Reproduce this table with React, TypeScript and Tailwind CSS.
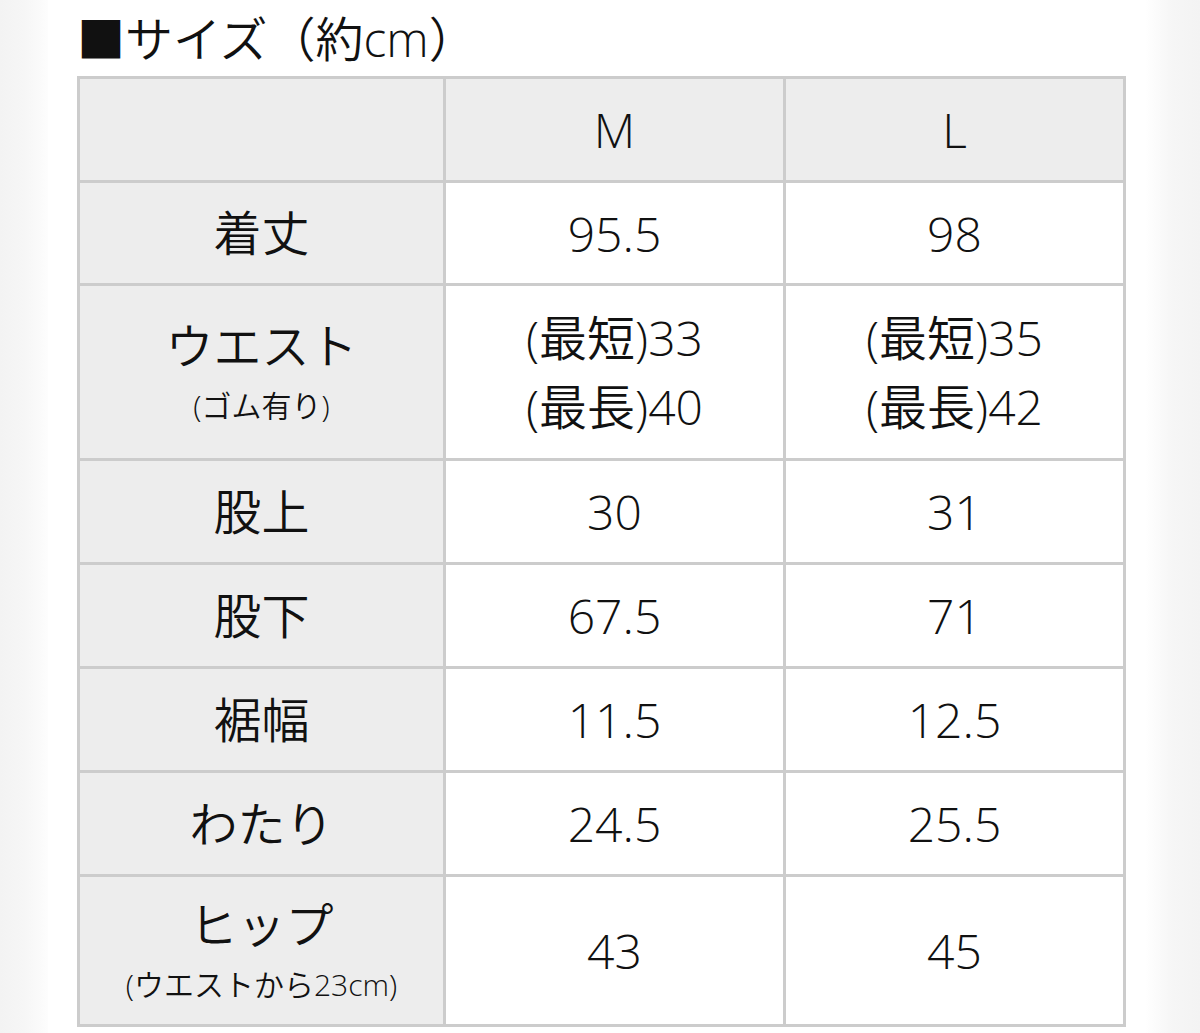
import React from "react";

type Row = {
  label: string;
  note?: string;
  m: string[];
  l: string[];
  h: string;
};

const rows: Row[] = [
  { label: "着丈", m: ["95.5"], l: ["98"], h: "h-[103px]" },
  {
    label: "ウエスト",
    note: "(ゴム有り)",
    m: ["(最短)33", "(最長)40"],
    l: ["(最短)35", "(最長)42"],
    h: "h-[175px]",
  },
  { label: "股上", m: ["30"], l: ["31"], h: "h-[104px]" },
  { label: "股下", m: ["67.5"], l: ["71"], h: "h-[104px]" },
  { label: "裾幅", m: ["11.5"], l: ["12.5"], h: "h-[104px]" },
  { label: "わたり", m: ["24.5"], l: ["25.5"], h: "h-[104px]" },
  {
    label: "ヒップ",
    note: "(ウエストから23cm)",
    m: ["43"],
    l: ["45"],
    h: "h-[150px]",
  },
];

const cell = "border-[3px] border-[#cccccc] text-center align-middle";

const Values = ({ lines }: { lines: string[] }) => (
  <div className="leading-[69px]">
    {lines.map((t) => (
      <div key={t}>{t}</div>
    ))}
  </div>
);

export default function App() {
  return (
    <div
      className="flex min-h-[1033px] w-[1200px] bg-white text-[#111] font-[350]"
      style={{ fontFamily: '"Open Sans", "Noto Sans CJK JP", sans-serif' }}
    >
      <div className="w-[48px] shrink-0 bg-gradient-to-r from-[#f3f3f3] via-[#f6f6f6] to-[#fdfdfd]" />
      <div className="w-[1097px] shrink-0 bg-white pl-[29px]">
        <h2 className="pt-[16px] pb-[14px] text-[48px] leading-[46px] font-[350]">
          ■サイズ（約cm）
        </h2>
        <table className="table-fixed border-collapse w-[1046px]">
          <colgroup>
            <col className="w-[366px]" />
            <col className="w-[340px]" />
            <col className="w-[340px]" />
          </colgroup>
          <thead>
            <tr className="h-[104px] bg-[#ededed] text-[48px]">
              <th className={cell + " font-[350]"}></th>
              <th className={cell + " font-[350]"}>M</th>
              <th className={cell + " font-[350]"}>L</th>
            </tr>
          </thead>
          <tbody>
            {rows.map((r) => (
              <tr key={r.label} className={r.h + " text-[48px]"}>
                <td className={cell + " bg-[#ededed]"}>
                  <div className="leading-[56px]">{r.label}</div>
                  {r.note && (
                    <div className="mt-[12px] text-[30px] leading-[40px]">
                      {r.note}
                    </div>
                  )}
                </td>
                <td className={cell}>
                  <Values lines={r.m} />
                </td>
                <td className={cell}>
                  <Values lines={r.l} />
                </td>
              </tr>
            ))}
          </tbody>
        </table>
      </div>
      <div className="flex-1 bg-gradient-to-r from-[#ffffff] via-[#f6f6f6] to-[#f3f3f3]" />
    </div>
  );
}
